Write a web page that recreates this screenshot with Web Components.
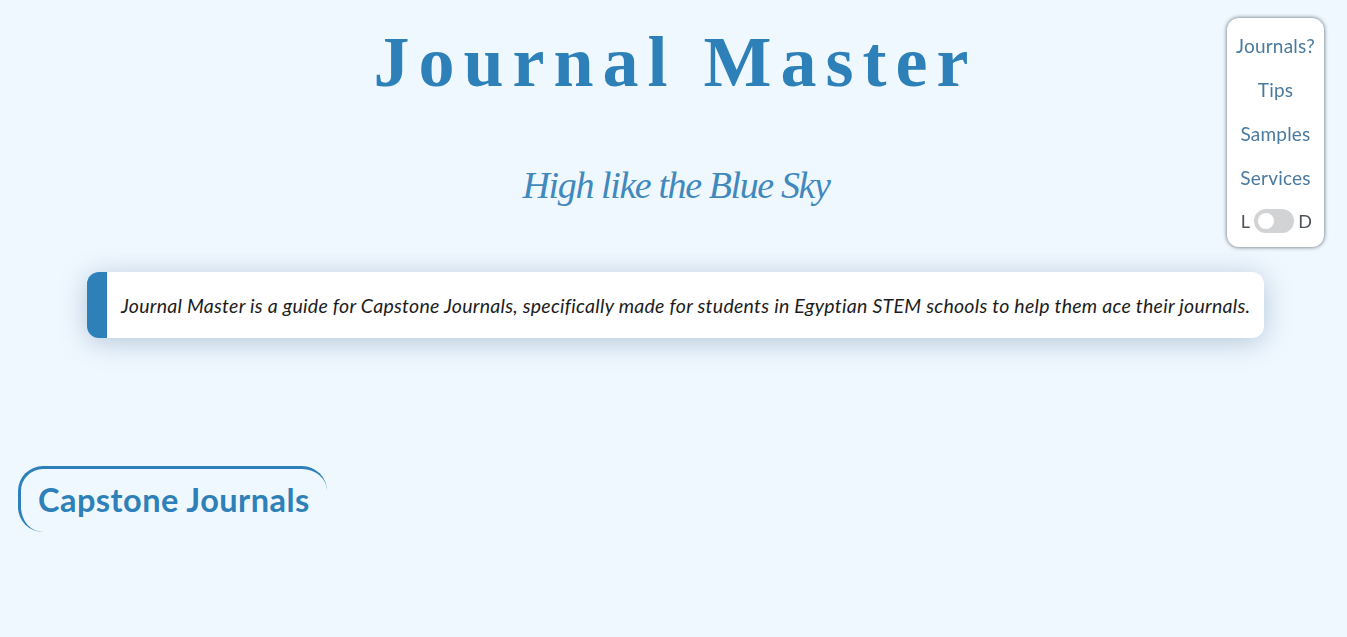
<!DOCTYPE html>
<html lang="en">
<head>
<meta charset="utf-8">
<title>Journal Master</title>
<style>
    html, body {
        margin: 0;
        height: 100%;
        background-color: #f0f8ff;
    }
    body {
        overflow: hidden;
    }
</style>
</head>
<body>
<site-nav>
    <a>Journals?</a>
    <a>Tips</a>
    <a>Samples</a>
    <a>Services</a>
</site-nav>
<site-header title-text="Journal Master" slogan="High like the Blue Sky"></site-header>
<intro-card>Journal Master is a guide for Capstone Journals, specifically made for students in Egyptian STEM schools to help them ace their journals.</intro-card>
<section-title>Capstone Journals</section-title>

<script>
class SiteHeader extends HTMLElement {
    constructor() {
        super()
        const shadow = this.attachShadow({mode: "open"})
        shadow.innerHTML = `
<style>
    :host {
        display: block;
        text-align: center;
        color: #2e81b8;
    }
    h1 {
        margin: 0;
        padding: 24px 0 0 4px;
        font: bold 72px/76px "Liberation Serif", serif;
        letter-spacing: 9px;
    }
    p {
        margin: 0;
        padding: 59px 0 0 5px;
        font: italic 38px/52px "Liberation Serif", serif;
        letter-spacing: -1.4px;
        color: #4189bd;
    }
</style>
<h1></h1>
<p></p>`
    }

    connectedCallback() {
        this.shadowRoot.querySelector("h1").textContent = this.getAttribute("title-text")
        this.shadowRoot.querySelector("p").textContent = this.getAttribute("slogan")
    }
}

class SiteNav extends HTMLElement {
    constructor() {
        super()
        const shadow = this.attachShadow({mode: "open"})
        shadow.innerHTML = `
<style>
    :host {
        position: fixed;
        top: 18px;
        right: 23px;
        width: 97px;
        height: 229px;
        box-sizing: border-box;
        padding: 17px 0 0;
        display: flex;
        flex-direction: column;
        align-items: center;
        gap: 22px;
        background-color: #fff;
        border-radius: 12px;
        box-shadow: 0 0 4px rgba(20, 35, 50, 0.7);
        font: 19px/22px "Lato", sans-serif;
        letter-spacing: 0.2px;
        color: #4a7aa0;
    }
    ::slotted(a) {
        display: block;
    }
    .toggle {
        display: flex;
        align-items: center;
        gap: 4px;
        margin: -2px 0 0 2px;
        color: #4d5358;
        font-size: 18px;
    }
    .track {
        width: 40px;
        height: 24px;
        border-radius: 12px;
        background-color: #d2d3d5;
        display: flex;
        align-items: center;
        padding-left: 4px;
        box-sizing: border-box;
    }
    .knob {
        width: 16px;
        height: 16px;
        border-radius: 50%;
        background-color: #fff;
    }
</style>
<slot></slot>
<div class="toggle">L<div class="track"><div class="knob"></div></div>D</div>`
    }
}

class IntroCard extends HTMLElement {
    constructor() {
        super()
        const shadow = this.attachShadow({mode: "open"})
        shadow.innerHTML = `
<style>
    :host {
        display: block;
        box-sizing: border-box;
        width: 1177px;
        height: 66px;
        margin: 61px 0 0 87px;
        padding: 22px 0 0 14px;
        background-color: #fff;
        border-left: 20px solid #2e81b8;
        border-radius: 12px;
        box-shadow: 0 4px 28px rgba(40, 85, 125, 0.3);
        font: italic 19.5px/24px "Lato", sans-serif;
        letter-spacing: 0.27px;
        color: #1c1c1c;
        white-space: nowrap;
    }
</style>
<slot></slot>`
    }
}

class SectionTitle extends HTMLElement {
    constructor() {
        super()
        const shadow = this.attachShadow({mode: "open"})
        shadow.innerHTML = `
<style>
    :host {
        display: block;
        box-sizing: border-box;
        width: 309px;
        height: 66px;
        margin: 128px 0 0 18px;
        padding: 13px 0 0 17px;
        border-top: 3px solid #2e81b8;
        border-left: 3px solid #2e81b8;
        border-radius: 25px;
        font: bold 32.5px/36px "Lato", sans-serif;
        letter-spacing: 0.47px;
        color: #2e81b8;
    }
</style>
<slot></slot>`
    }
}

customElements.define("site-header", SiteHeader)
customElements.define("site-nav", SiteNav)
customElements.define("intro-card", IntroCard)
customElements.define("section-title", SectionTitle)
</script>
</body>
</html>
